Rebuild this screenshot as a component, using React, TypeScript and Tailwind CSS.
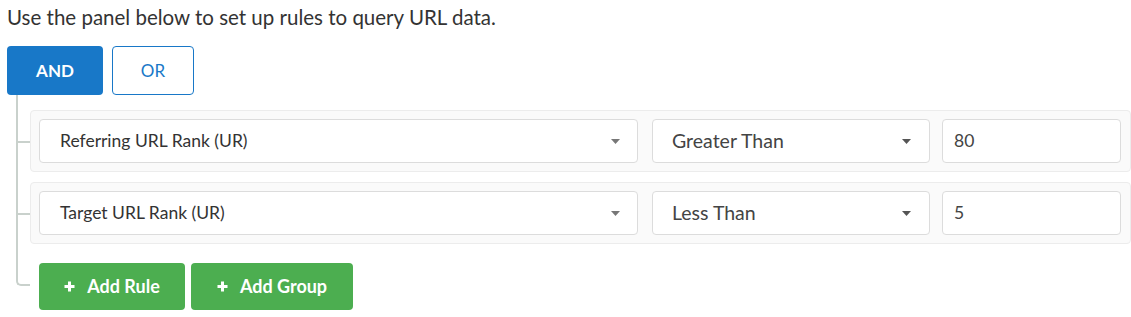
import React from "react";

const Caret = ({ className }: { className: string }) => (
  <svg width="9" height="5" viewBox="0 0 9 5" className={className}>
    <path d="M0 0 L9 0 L4.5 5 Z" fill="currentColor" />
  </svg>
);

const Plus = () => (
  <svg width="11" height="11" viewBox="0 0 11 11" className="text-white">
    <path d="M5.5 0.5 V10.5 M0.5 5.5 H10.5" stroke="currentColor" strokeWidth="3" />
  </svg>
);

function RuleRow({ field, op, value }: { field: string; op: string; value: string }) {
  return (
    <div className="relative">
      <div className="absolute left-[-14px] top-1/2 h-[2px] w-[14px] bg-[#c9d1cc]" />
      <div className="flex items-center rounded-[4px] border border-[#ececec] bg-[#fafafa] p-[8px]">
        <div className="flex h-[44px] w-[599px] items-center justify-between rounded-[4px] border border-[#dcdcdc] bg-white pl-[20px] pr-[17px] text-[17.5px] text-[#333]">
          <span>{field}</span>
          <Caret className="text-[#777]" />
        </div>
        <div className="ml-[14px] flex h-[44px] w-[278px] items-center justify-between rounded-[4px] border border-[#dcdcdc] bg-white pl-[19px] pr-[18px] text-[19.5px] text-[#444]">
          <span>{op}</span>
          <Caret className="text-[#555]" />
        </div>
        <div className="ml-[12px] flex h-[44px] w-[179px] items-center rounded-[4px] border border-[#dcdcdc] bg-white px-[11px] text-[17.5px] text-[#444]">
          {value}
        </div>
      </div>
    </div>
  );
}

export default function App() {
  return (
    <div className="min-h-[317px] bg-white pl-[7px] pt-[3px]" style={{ fontFamily: "Lato, 'Open Sans', sans-serif" }}>
      <p className="text-[20.5px] leading-[28px] text-[#333]">Use the panel below to set up rules to query URL data.</p>
      <div className="mt-[15px] flex gap-[9px]">
        <button className="h-[49px] w-[96px] rounded-[4px] bg-[#1878c8] text-[17px] font-bold text-white">AND</button>
        <button className="h-[49px] w-[82px] rounded-[4px] border-[1.5px] border-[#1878c8] bg-white text-[17px] text-[#1878c8]">OR</button>
      </div>
      <div className="relative ml-[23px] flex flex-col gap-[10px] pt-[15px]">
        <div className="absolute left-[-14px] top-0 bottom-[30px] w-[2px] bg-[#c9d1cc]" />
        <RuleRow field="Referring URL Rank (UR)" op="Greater Than" value="80" />
        <RuleRow field="Target URL Rank (UR)" op="Less Than" value="5" />
        <div className="relative mt-[9px] flex gap-[6px] pl-[9px]">
          <div className="absolute left-[-14px] top-[10px] h-[13px] w-[14px] rounded-bl-[5px] border-l-2 border-b-2 border-[#c9d1cc]" />
          <button className="flex h-[47px] w-[146px] items-center justify-center gap-[12px] rounded-[4px] bg-[#4cae50] text-[18px] font-bold text-white">
            <Plus />
            <span>Add Rule</span>
          </button>
          <button className="flex h-[47px] w-[162px] items-center justify-center gap-[12px] rounded-[4px] bg-[#4cae50] text-[18px] font-bold text-white">
            <Plus />
            <span>Add Group</span>
          </button>
        </div>
      </div>
    </div>
  );
}
